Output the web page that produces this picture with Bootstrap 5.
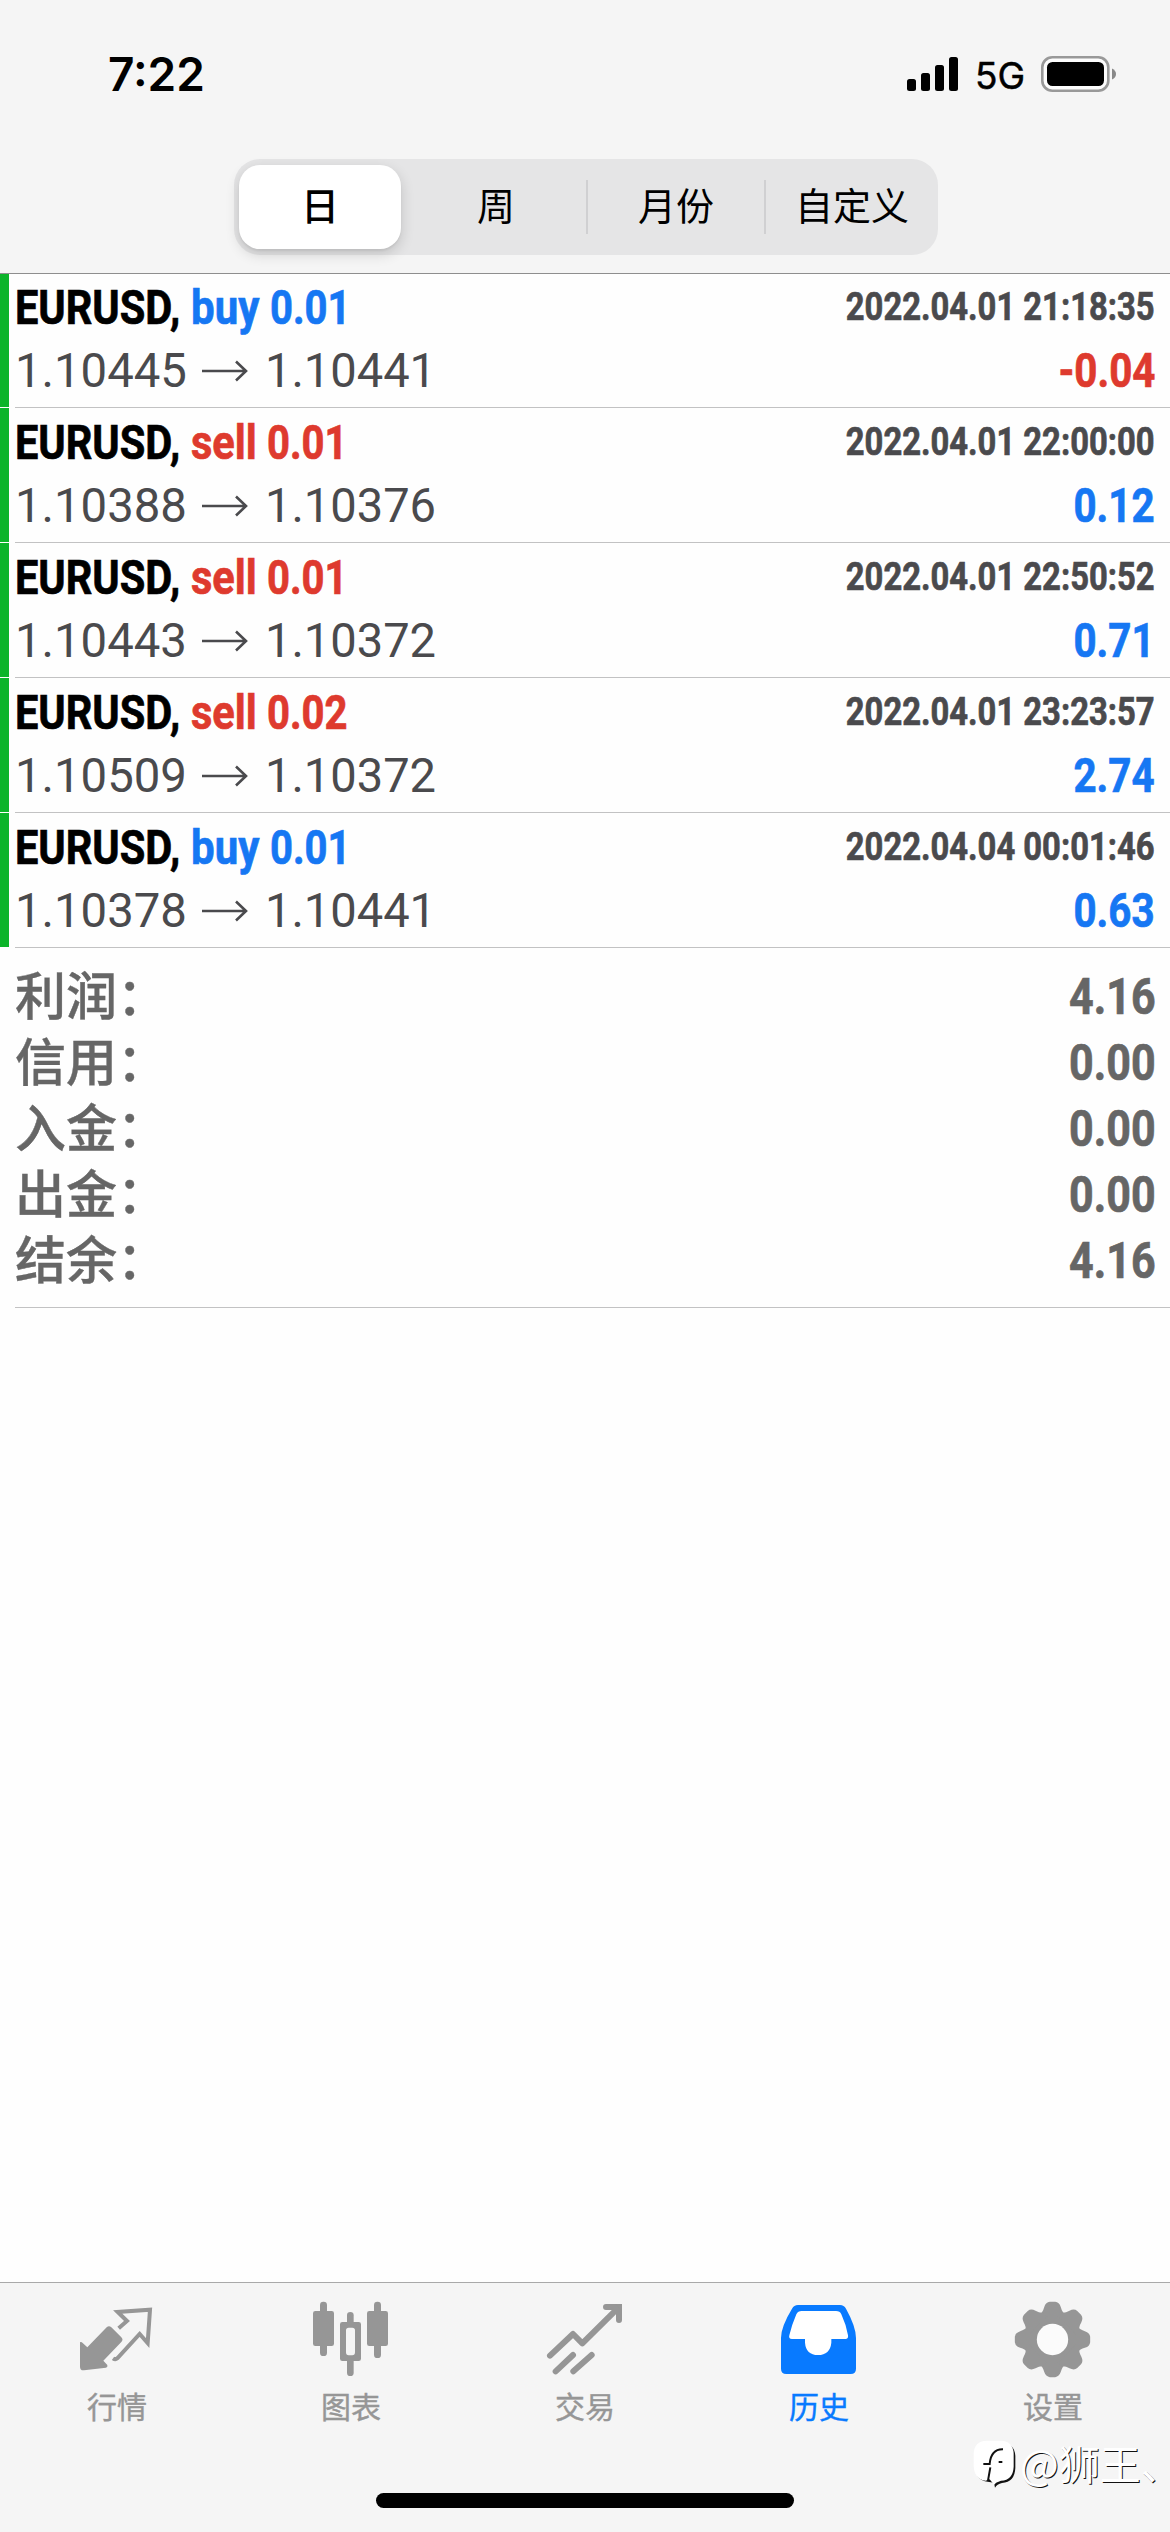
<!DOCTYPE html>
<html lang="zh-CN">
<head>
<meta charset="utf-8">
<meta name="viewport" content="width=device-width, initial-scale=1">
<title>历史</title>
<link href="https://cdn.jsdelivr.net/npm/bootstrap@5.3.0/dist/css/bootstrap.min.css" rel="stylesheet">
<style>
  body { width: 1170px; height: 2532px; background: #fefefe; overflow: hidden; color: #000;
    font-family: Roboto, "Liberation Sans", "Noto Sans CJK SC", sans-serif; }
  svg { display: block; flex: none; }

  /* header */
  .top-bar { height: 274px; background: #f5f5f5; border-bottom: 1px solid #8e8e8e; z-index: 1; }
  .status-row { height: 159px; padding: 49px 54px 0 108px; font-family: Inter, sans-serif; }
  .status-row > div { height: 50px; }
  .clock { font-size: 46px; font-weight: 600; line-height: 51px; }
  .net { font-size: 37px; line-height: 54px; margin: 3px 17px 0 16px; width: 49px; white-space: nowrap; -webkit-text-stroke: .5px; }
  .segments { width: 704px; height: 96px; margin-left: 234px; border-radius: 26px; background: #e5e5e6;
    font-family: "Noto Sans CJK SC", sans-serif; font-size: 38px; }
  .seg { border: 0; background: none; padding: 0 0 6px; color: #000; text-align: center; height: 84px; line-height: 76px; }
  .seg-on { width: 162px; margin: 0 5px; border-radius: 21px; background: #fff; font-weight: 500;
    box-shadow: 0 5px 14px rgba(0,0,0,.16), 0 2px 2px rgba(0,0,0,.05); }
  .split { width: 2px; height: 54px; background: #d0d0d2; }

  /* deals */
  .deals { margin-top: -1px; }
  .deal { height: 135px; }
  .stripe { width: 9px; height: 134px; background: #0cb42a; }
  .deal-body { margin-left: 6px; border-bottom: 1px solid #c2c2c3; padding: 3px 15px 0 0; }
  .line { height: 63px; line-height: 63px; font-size: 48px; }
  .line span { white-space: nowrap; display: block; transform-origin: 0 50%; }
  .cond, .stamp, .gain, .sum { -webkit-text-stroke: .7px; }
  .cond { font-weight: 700; }
  .sym { width: 176px; transform: scaleX(.865); }
  .side-buy { width: 78.5px; transform: scaleX(.875); }
  .side-sell { width: 76px; transform: scaleX(.865); }
  .lot { width: 80px; transform: scaleX(.835); }
  .line .stamp { font-size: 39px; font-weight: 700; transform: scaleX(.84); transform-origin: 100% 50%; }
  .line .gain { font-weight: 700; transform: scaleX(.84); transform-origin: 100% 50%; }
  .from { width: 187px; transform: scaleX(.985); }
  .to { margin-left: 17px; transform: scaleX(.98); }
  .ink { color: #4a4a4d; }
  .blue { color: #1677f3; }
  .red { color: #de3a2e; }

  /* totals */
  .totals { margin-left: 15px; padding: 15px 14px 14px 0; border-bottom: 1px solid #c2c2c3; color: #666; }
  .totals > div { height: 66px; line-height: 68px; }
  .totals .name { font: 500 51px/60px "Noto Sans CJK SC", sans-serif; height: 66px; -webkit-text-stroke: .4px; }
  .totals .sum { font-size: 50px; font-weight: 700; transform: scaleX(.86); transform-origin: 100% 50%; }

  /* bottom bar */
  .tabs { height: 250px; background: #f5f5f5; border-top: 1px solid #a9a9a9; padding-top: 17px; color: #969696; }
  .tab { width: 234px; }
  .tab span { font: 400 30px/40px "Noto Sans CJK SC", sans-serif; margin-top: 5px; -webkit-text-stroke: .4px; }
  .tab.current { color: #087aff; }
  .home-bar { width: 418px; height: 15px; border-radius: 8px; background: #000; margin: 68px auto 0; }
  .mark-user { right: 0; bottom: 32px; width: 197px; height: 70px; color: #fff; }
  .mark-user span { font: 400 41px/52px "Noto Sans CJK SC", sans-serif; height: 58px; font-feature-settings: "halt"; white-space: nowrap; text-shadow: 1px 1px 0 #111; margin-left: 3px; }
</style>
<script src="https://cdn.jsdelivr.net/npm/bootstrap@5.3.0/dist/js/bootstrap.bundle.min.js"></script>
</head>
<body class="d-flex flex-column position-relative">

<header class="top-bar position-relative">
  <div class="status-row d-flex justify-content-between">
    <div class="clock">7:22</div>
    <div class="d-flex align-items-center">
      <svg width="52" height="36" viewBox="0 0 52 36"><rect x="0" y="23" width="9" height="12" rx="2.5"/><rect x="14" y="17" width="9" height="18" rx="2.5"/><rect x="28" y="9" width="9" height="26" rx="2.5"/><rect x="42" y="1" width="9" height="34" rx="2.5"/></svg>
      <div class="net">5G</div>
      <svg width="75" height="36" viewBox="0 0 75 36"><rect x="1.3" y="1.3" width="66" height="33.4" rx="10" fill="#fdfdfd" stroke="#999" stroke-width="2.6"/><rect x="6" y="6" width="57" height="24" rx="5.5"/><path d="M71 12.5q4 2 4 5.500t-4 5.500z" fill="#888"/></svg>
    </div>
  </div>
  <div class="segments d-flex align-items-center">
    <button class="seg seg-on">日</button>
    <button class="seg" style="width:180px">周</button>
    <div class="split"></div>
    <button class="seg" style="width:176px">月份</button>
    <div class="split"></div>
    <button class="seg" style="width:172px">自定义</button>
  </div>
</header>

<main class="flex-grow-1">
  <div class="deals">
    <div class="deal d-flex"><div class="stripe"></div>
      <div class="deal-body flex-grow-1">
        <div class="line d-flex justify-content-between"><div class="d-flex cond"><span class="sym">EURUSD,</span><span class="side-buy blue">buy</span><span class="lot blue">0.01</span></div><span class="stamp ink">2022.04.01 21:18:35</span></div>
        <div class="line d-flex justify-content-between"><div class="d-flex align-items-center ink"><span class="from">1.10445</span><svg width="46" height="24" viewBox="0 0 46 24" fill="none" stroke="currentColor" stroke-width="2.6"><path d="M0 12H44M34 2.500L44 12L34 21.500"/></svg><span class="to">1.10441</span></div><span class="gain red">-0.04</span></div>
      </div></div>
    <div class="deal d-flex"><div class="stripe"></div>
      <div class="deal-body flex-grow-1">
        <div class="line d-flex justify-content-between"><div class="d-flex cond"><span class="sym">EURUSD,</span><span class="side-sell red">sell</span><span class="lot red">0.01</span></div><span class="stamp ink">2022.04.01 22:00:00</span></div>
        <div class="line d-flex justify-content-between"><div class="d-flex align-items-center ink"><span class="from">1.10388</span><svg width="46" height="24" viewBox="0 0 46 24" fill="none" stroke="currentColor" stroke-width="2.6"><path d="M0 12H44M34 2.500L44 12L34 21.500"/></svg><span class="to">1.10376</span></div><span class="gain blue">0.12</span></div>
      </div></div>
    <div class="deal d-flex"><div class="stripe"></div>
      <div class="deal-body flex-grow-1">
        <div class="line d-flex justify-content-between"><div class="d-flex cond"><span class="sym">EURUSD,</span><span class="side-sell red">sell</span><span class="lot red">0.01</span></div><span class="stamp ink">2022.04.01 22:50:52</span></div>
        <div class="line d-flex justify-content-between"><div class="d-flex align-items-center ink"><span class="from">1.10443</span><svg width="46" height="24" viewBox="0 0 46 24" fill="none" stroke="currentColor" stroke-width="2.6"><path d="M0 12H44M34 2.500L44 12L34 21.500"/></svg><span class="to">1.10372</span></div><span class="gain blue">0.71</span></div>
      </div></div>
    <div class="deal d-flex"><div class="stripe"></div>
      <div class="deal-body flex-grow-1">
        <div class="line d-flex justify-content-between"><div class="d-flex cond"><span class="sym">EURUSD,</span><span class="side-sell red">sell</span><span class="lot red">0.02</span></div><span class="stamp ink">2022.04.01 23:23:57</span></div>
        <div class="line d-flex justify-content-between"><div class="d-flex align-items-center ink"><span class="from">1.10509</span><svg width="46" height="24" viewBox="0 0 46 24" fill="none" stroke="currentColor" stroke-width="2.6"><path d="M0 12H44M34 2.500L44 12L34 21.500"/></svg><span class="to">1.10372</span></div><span class="gain blue">2.74</span></div>
      </div></div>
    <div class="deal d-flex"><div class="stripe"></div>
      <div class="deal-body flex-grow-1">
        <div class="line d-flex justify-content-between"><div class="d-flex cond"><span class="sym">EURUSD,</span><span class="side-buy blue">buy</span><span class="lot blue">0.01</span></div><span class="stamp ink">2022.04.04 00:01:46</span></div>
        <div class="line d-flex justify-content-between"><div class="d-flex align-items-center ink"><span class="from">1.10378</span><svg width="46" height="24" viewBox="0 0 46 24" fill="none" stroke="currentColor" stroke-width="2.6"><path d="M0 12H44M34 2.500L44 12L34 21.500"/></svg><span class="to">1.10441</span></div><span class="gain blue">0.63</span></div>
      </div></div>
  </div>

  <div class="totals">
    <div class="d-flex justify-content-between"><span class="name">利润：</span><span class="sum">4.16</span></div>
    <div class="d-flex justify-content-between"><span class="name">信用：</span><span class="sum">0.00</span></div>
    <div class="d-flex justify-content-between"><span class="name">入金：</span><span class="sum">0.00</span></div>
    <div class="d-flex justify-content-between"><span class="name">出金：</span><span class="sum">0.00</span></div>
    <div class="d-flex justify-content-between"><span class="name">结余：</span><span class="sum">4.16</span></div>
  </div>
</main>

<footer class="tabs">
  <nav class="d-flex">
    <div class="tab d-flex flex-column align-items-center">
      <svg width="80" height="80" viewBox="231 90 240 240" fill="currentColor"><path d="M240 217Q244 215 248 219L262 232L320 172Q327 165 334 172L364 202Q371 209 364 216L310 272L322 285Q324 292 318 293L252 301Q240 302 240 290Z"/><path d="M356 175L381 153L353 126L450 119L443 219L419 192L352 265Q346 270 339 265" fill="none" stroke="currentColor" stroke-width="12"/></svg>
      <span>行情</span>
    </div>
    <div class="tab d-flex flex-column align-items-center">
      <svg width="80" height="80" viewBox="933 90 240 240" fill="currentColor"><rect x="939" y="123" width="63" height="105" rx="7"/><rect x="960" y="95" width="21" height="163" rx="10"/><rect x="1101" y="123" width="63" height="105" rx="7"/><rect x="1122" y="95" width="21" height="169" rx="10"/><rect x="1041" y="126" width="20" height="45" rx="10"/><rect x="1041" y="262" width="20" height="56" rx="10"/><path fill-rule="evenodd" d="M1027 156H1076Q1083 156 1083 163V266Q1083 273 1076 273H1027Q1020 273 1020 266V163Q1020 156 1027 156ZM1046 173Q1038 173 1038 181V247Q1038 256 1046 256H1057Q1065 256 1065 247V181Q1065 173 1057 173Z"/></svg>
      <span>图表</span>
    </div>
    <div class="tab d-flex flex-column align-items-center">
      <svg width="80" height="80" viewBox="225 90 240 240" fill="none" stroke="currentColor" stroke-width="18" stroke-linecap="round" stroke-linejoin="round"><path d="M240 257L309 192L337 220L440 118M408 111H447V150"/><path d="M436 102H456V122Z" fill="currentColor" stroke="none"/><path d="M257 304L309 255M310 304L365 255"/></svg>
      <span>交易</span>
    </div>
    <div class="tab current d-flex flex-column align-items-center">
      <svg width="80" height="80" viewBox="927 90 240 240"><path fill="currentColor" d="M984 105H1110Q1122 105 1128 116Q1158 170 1158 204V296Q1158 312 1142 312H949Q933 312 933 296V204Q933 170 966 116Q972 105 984 105Z"/><path fill="#fff" d="M995 123H1098Q1110 123 1114 133Q1128 163 1134 196Q1136 207 1126 207H1084V218Q1080 255 1044 255Q1008 255 1005 218V207H966Q955 207 958 196Q966 163 979 133Q984 123 995 123Z"/></svg>
      <span>历史</span>
    </div>
    <div class="tab d-flex flex-column align-items-center">
      <svg width="80" height="80" viewBox="339 90 240 240"><g fill="currentColor" transform="translate(457.500 208.500)"><circle r="86"/><g id="cogs"><path id="tooth" d="M-38 -76Q-29 -82 -25 -97Q-20 -112 -8 -113H8Q20 -112 25 -97Q29 -82 38 -76V-60H-38Z"/><use href="#tooth" transform="rotate(90)"/><use href="#tooth" transform="rotate(180)"/><use href="#tooth" transform="rotate(270)"/></g><use href="#cogs" transform="rotate(45)"/></g><circle cx="457.500" cy="208.500" r="47" fill="#fbfbfb"/></svg>
      <span>设置</span>
    </div>
  </nav>
  <div class="home-bar"></div>
</footer>

<div class="mark-user position-absolute d-flex align-items-center">
  <svg width="44" height="50" viewBox="218 528 132 150"><path d="M262 537H304Q342 537 345 575V612Q343 655 305 657Q290 660 284 671L281 656L262 653Q226 650 226 610V572Q228 537 262 537Z" fill="#111"/><path d="M258 530H302Q338 532 340 568V608Q338 648 302 650Q286 655 281 662L268 646L256 650Q222 646 220 606V568Q222 532 258 530Z" fill="#fff"/><path d="M249 600H268Q272 555 308 556M270 610L263 650M295 594H306" fill="none" stroke="#111" stroke-width="6"/></svg>
  <span>@狮王、</span>
</div>
</body>
</html>
